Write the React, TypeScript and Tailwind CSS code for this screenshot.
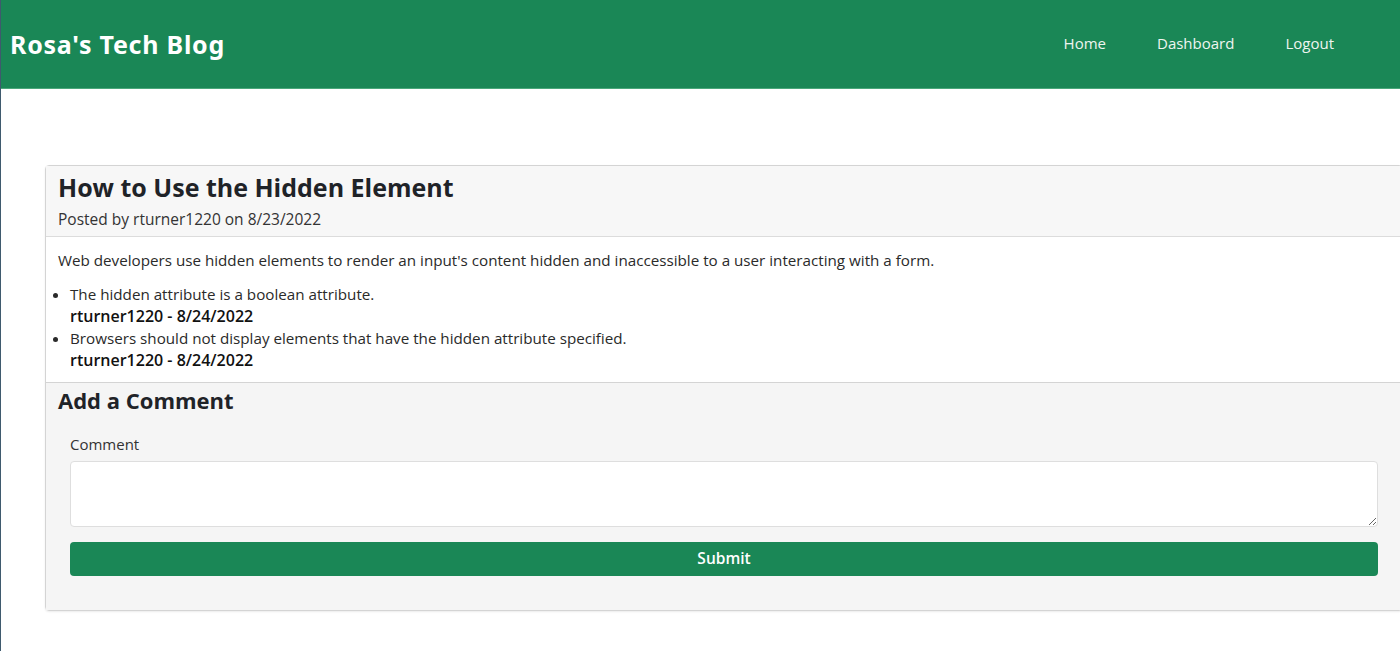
const BODY = "font-['Open_Sans',sans-serif]"

function NavLink({ label }: { label: string }) {
  return <a className="text-[15px] text-[#eef5f0]">{label}</a>
}

export default function App() {
  return (
    <div className={`min-h-[651px] overflow-x-hidden border-l border-[#3f5a6e] bg-white ${BODY}`}>
      <header className="flex h-[89px] items-center justify-between border-b border-[#4aa77a] bg-[#1a8756] pl-[9px] pr-[66px]">
        <h1 className="pt-[2px] font-['Noto_Sans',sans-serif] text-[25px] font-bold tracking-[0.75px] text-white">
          Rosa's Tech Blog
        </h1>
        <nav className="flex gap-[51px] pb-[1px]">
          <NavLink label="Home" />
          <NavLink label="Dashboard" />
          <NavLink label="Logout" />
        </nav>
      </header>

      <main className="pl-[44px] pt-[76px]">
        <article className="w-[1358px] rounded-[4px] border border-[#d4d4d4] text-[#212529] shadow-[0_1px_2px_rgba(0,0,0,0.08)]">
          <div className="border-b border-[#dcdcdc] bg-[#f7f7f7] px-[12px] pb-[6px] pt-[5px]">
            <h2 className="text-[25px] font-bold leading-[32px] text-[#1f2328]">How to Use the Hidden Element</h2>
            <p className="mt-[5px] text-[15.5px] leading-[22px] text-[#333]">Posted by rturner1220 on 8/23/2022</p>
          </div>

          <div className="border-b border-[#d4d4d4] bg-white px-[12px] pb-[11px] pt-[12px] text-[15.2px] leading-[22px] text-[#2a2a2a]">
            <p>Web developers use hidden elements to render an input's content hidden and inaccessible to a user interacting with a form.</p>
            <ul className="mt-[12px] list-disc pl-[12px]">
              <li>
                The hidden attribute is a boolean attribute.
                <div className="text-[16px] font-semibold text-[#111]">rturner1220 - 8/24/2022</div>
              </li>
              <li>
                Browsers should not display elements that have the hidden attribute specified.
                <div className="text-[16px] font-semibold text-[#111]">rturner1220 - 8/24/2022</div>
              </li>
            </ul>
          </div>

          <form className="bg-[#f5f5f5] px-[12px] pb-[34px] pt-[2px]">
            <h3 className="text-[22px] font-bold leading-[30px] text-[#1f2328]">Add a Comment</h3>
            <div className="px-[12px]">
              <label className="mt-[19px] block text-[15px] leading-[20px] text-[#333]">Comment</label>
              <textarea className="mt-[7px] block h-[66px] w-full rounded-[4px] border border-[#dedede] bg-white" />
              <button
                type="button"
                className="mt-[15px] h-[34px] w-full rounded-[4px] bg-[#1a8756] text-[15.5px] font-semibold text-white"
              >
                Submit
              </button>
            </div>
          </form>
        </article>
      </main>
    </div>
  )
}
